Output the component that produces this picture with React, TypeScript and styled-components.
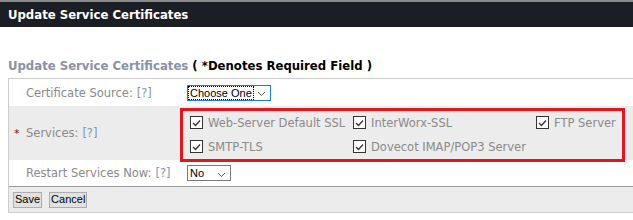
import React from 'react';
import styled, { createGlobalStyle } from 'styled-components';

const GlobalStyle = createGlobalStyle`
  html, body {
    margin: 0;
    padding: 0;
    background: #ffffff;
    font-family: "DejaVu Sans", sans-serif;
  }
`;

const TitleBar = styled.div`
  height: 25px;
  border-top: 2px solid #8a8a8a;
  background: #1b1e25;
  color: #ffffff;
  font-family: "DejaVu Sans Condensed", "DejaVu Sans", sans-serif;
  font-weight: bold;
  font-size: 13px;
  line-height: 25px;
  padding-left: 8px;
`;

const Page = styled.div`
  padding: 30px 0 0 8px;
`;

const SectionHeading = styled.div`
  font-family: "DejaVu Sans Condensed", "DejaVu Sans", sans-serif;
  font-size: 13px;
  font-weight: bold;
  height: 21px;
  line-height: 18px;
  color: #8892a6;
`;

const Note = styled.span`
  color: #000000;
`;

const FormTable = styled.div`
  border-top: 1px solid #cccccc;
  border-left: 1px solid #cccccc;
`;

const Row = styled.div<{ $shade?: boolean; $height: number }>`
  display: grid;
  grid-template-columns: 171px 1fr;
  min-height: ${p => p.$height}px;
  background: ${p => (p.$shade ? '#ececec' : '#ffffff')};
`;

const Label = styled.div`
  display: flex;
  align-items: center;
  padding-left: 17px;
  font-size: 11.5px;
  color: #8a8a8a;
  white-space: nowrap;
  position: relative;
`;

const Required = styled.span`
  position: absolute;
  left: 5px;
  color: #7a1010;
  font-size: 11px;
`;

const Help = styled.span`
  color: #8394b0;
  margin-left: 4px;
`;

const Field = styled.div`
  display: flex;
  align-items: center;
`;

const Select = styled.div<{ $width: number; $focused?: boolean }>`
  box-sizing: border-box;
  width: ${p => p.$width}px;
  height: 16px;
  margin-left: 7px;
  border: 1px solid ${p => (p.$focused ? '#1e7ad6' : '#7a7a7a')};
  background: #ffffff;
  display: flex;
  align-items: center;
  justify-content: space-between;
  font-family: "Liberation Sans", Arial, sans-serif;
  font-size: 11px;
  color: #000000;
  white-space: nowrap;
`;

const SelectText = styled.span<{ $focused?: boolean }>`
  padding: 0 1px;
  line-height: 12px;
  outline: ${p => (p.$focused ? '1px dotted #000' : 'none')};
  margin-left: 1px;
`;

const Chevron = styled.svg`
  width: 9px;
  height: 6px;
  margin: 3px 4px 0 0;
  flex-shrink: 0;
`;

const ServicesBox = styled.div`
  margin: 1px 0 -2px 0;
  width: 445px;
  box-sizing: border-box;
  border: 3px solid #e3161f;
  padding: 5px 0 5px 7px;
  display: grid;
  grid-template-columns: 163px 183px auto;
  row-gap: 10px;
`;

const Option = styled.label`
  display: flex;
  align-items: center;
  gap: 5px;
  font-size: 11.5px;
  color: #8a8a8a;
  height: 14px;
  white-space: nowrap;
`;

const Box = styled.span`
  box-sizing: border-box;
  width: 13px;
  height: 13px;
  border: 1px solid #333333;
  background: #ffffff;
  display: flex;
  align-items: center;
  justify-content: center;
`;

const ButtonBar = styled.div`
  border-top: 1px solid #999999;
  border-bottom: 1px solid #cccccc;
  background: #ececec;
  height: 25px;
  display: flex;
  align-items: center;
  gap: 7px;
  padding-left: 4px;
`;

const Button = styled.button`
  height: 16px;
  padding: 0 1px;
  border: 1px solid #adadad;
  background: #e1e1e1;
  font-family: "Liberation Sans", Arial, sans-serif;
  font-size: 11px;
  color: #000000;
  line-height: 13px;
`;

function Check() {
  return (
    <Box>
      <svg width="9" height="8" viewBox="0 0 9 8">
        <path d="M1 4 L3.5 6.5 L8 1.5" fill="none" stroke="#333" strokeWidth="1.3" />
      </svg>
    </Box>
  );
}

function Arrow() {
  return (
    <Chevron viewBox="0 0 9 6">
      <path d="M1 1 L4.5 4.5 L8 1" fill="none" stroke="#555" strokeWidth="1" />
    </Chevron>
  );
}

const services = [
  'Web-Server Default SSL',
  'InterWorx-SSL',
  'FTP Server',
  'SMTP-TLS',
  'Dovecot IMAP/POP3 Server',
];

export default function App() {
  return (
    <>
      <GlobalStyle />
      <TitleBar>Update Service Certificates</TitleBar>
      <Page>
        <SectionHeading>
          Update Service Certificates <Note>( *Denotes Required Field )</Note>
        </SectionHeading>
        <FormTable>
          <Row $height={27}>
            <Label>
              Certificate Source: <Help>[?]</Help>
            </Label>
            <Field>
              <Select $width={84} $focused>
                <SelectText $focused>Choose One</SelectText>
                <Arrow />
              </Select>
            </Field>
          </Row>
          <Row $shade $height={54}>
            <Label>
              <Required>*</Required>
              Services: <Help>[?]</Help>
            </Label>
            <Field>
              <ServicesBox>
                {services.map(s => (
                  <Option key={s}>
                    <Check />
                    {s}
                  </Option>
                ))}
              </ServicesBox>
            </Field>
          </Row>
          <Row $height={26}>
            <Label>
              Restart Services Now: <Help>[?]</Help>
            </Label>
            <Field>
              <Select $width={44}>
                <SelectText>No</SelectText>
                <Arrow />
              </Select>
            </Field>
          </Row>
          <ButtonBar>
            <Button>Save</Button>
            <Button>Cancel</Button>
          </ButtonBar>
        </FormTable>
      </Page>
    </>
  );
}
